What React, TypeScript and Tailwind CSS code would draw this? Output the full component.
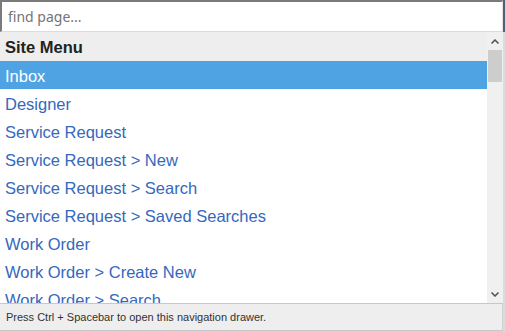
import React from "react";

const items = [
  "Inbox",
  "Designer",
  "Service Request",
  "Service Request > New",
  "Service Request > Search",
  "Service Request > Saved Searches",
  "Work Order",
  "Work Order > Create New",
  "Work Order > Search",
];

export default function App() {
  return (
    <div className="w-[505px] h-[331px] overflow-hidden bg-[#d6d6d6] flex flex-col font-['Liberation_Sans',Arial,sans-serif]">
      <div className="h-[32px] flex shrink-0">
        <div className="flex-1 border-t-2 border-l-2 border-[#7b7b7b] bg-white flex items-center pl-[6px] border-b border-b-[#dcdcdc] border-r border-r-[#e4e4e4]">
          <span className="text-[14px] text-[#757575] font-['Noto_Sans',sans-serif]">find page...</span>
        </div>
        <div className="w-[2px] bg-[#4f6178]" />
      </div>
      <div className="h-[271px] flex shrink-0">
        <div className="flex-1 overflow-hidden bg-white">
          <div className="h-[29px] bg-[#eeeeee] flex items-center pl-[5px] pt-[2px] text-[16.5px] font-bold text-[#222222]">
            Site Menu
          </div>
          {items.map((t, i) => (
            <div
              key={t}
              className={
                i === 0
                  ? "h-[28px] flex items-center pl-[5px] pt-[2px] text-[16.5px] bg-[#4fa3e3] text-white whitespace-nowrap"
                  : "h-[28px] flex items-center pl-[5px] pt-[2px] text-[16.5px] text-[#3468bd] whitespace-nowrap"
              }
            >
              {t}
            </div>
          ))}
        </div>
        <div className="w-[16px] bg-[#f0f0f0] flex flex-col">
          <div className="h-[18px] flex items-center justify-center">
            <svg width="8" height="5" viewBox="0 0 8 5">
              <path d="M0.5 4.5 L4 1 L7.5 4.5" fill="none" stroke="#505050" strokeWidth="1.5" />
            </svg>
          </div>
          <div className="h-[32px] mx-[1px] bg-[#cdcdcd]" />
          <div className="flex-1" />
          <div className="h-[18px] flex items-center justify-center">
            <svg width="8" height="5" viewBox="0 0 8 5">
              <path d="M0.5 0.5 L4 4 L7.5 0.5" fill="none" stroke="#505050" strokeWidth="1.5" />
            </svg>
          </div>
        </div>
        <div className="w-[2px] bg-[#dcdcdc]" />
      </div>
      <div className="flex-1 flex">
        <div className="flex-1 bg-[#eeeeee] border-t border-[#c8c8c8] border-b border-r border-b-[#c8c8c8] border-r-[#d0d0d0] flex items-center pl-[6px] text-[11px] text-[#333333]">
          Press Ctrl + Spacebar to open this navigation drawer.
        </div>
        <div className="w-[2px] bg-[#dcdcdc]" />
      </div>
    </div>
  );
}
